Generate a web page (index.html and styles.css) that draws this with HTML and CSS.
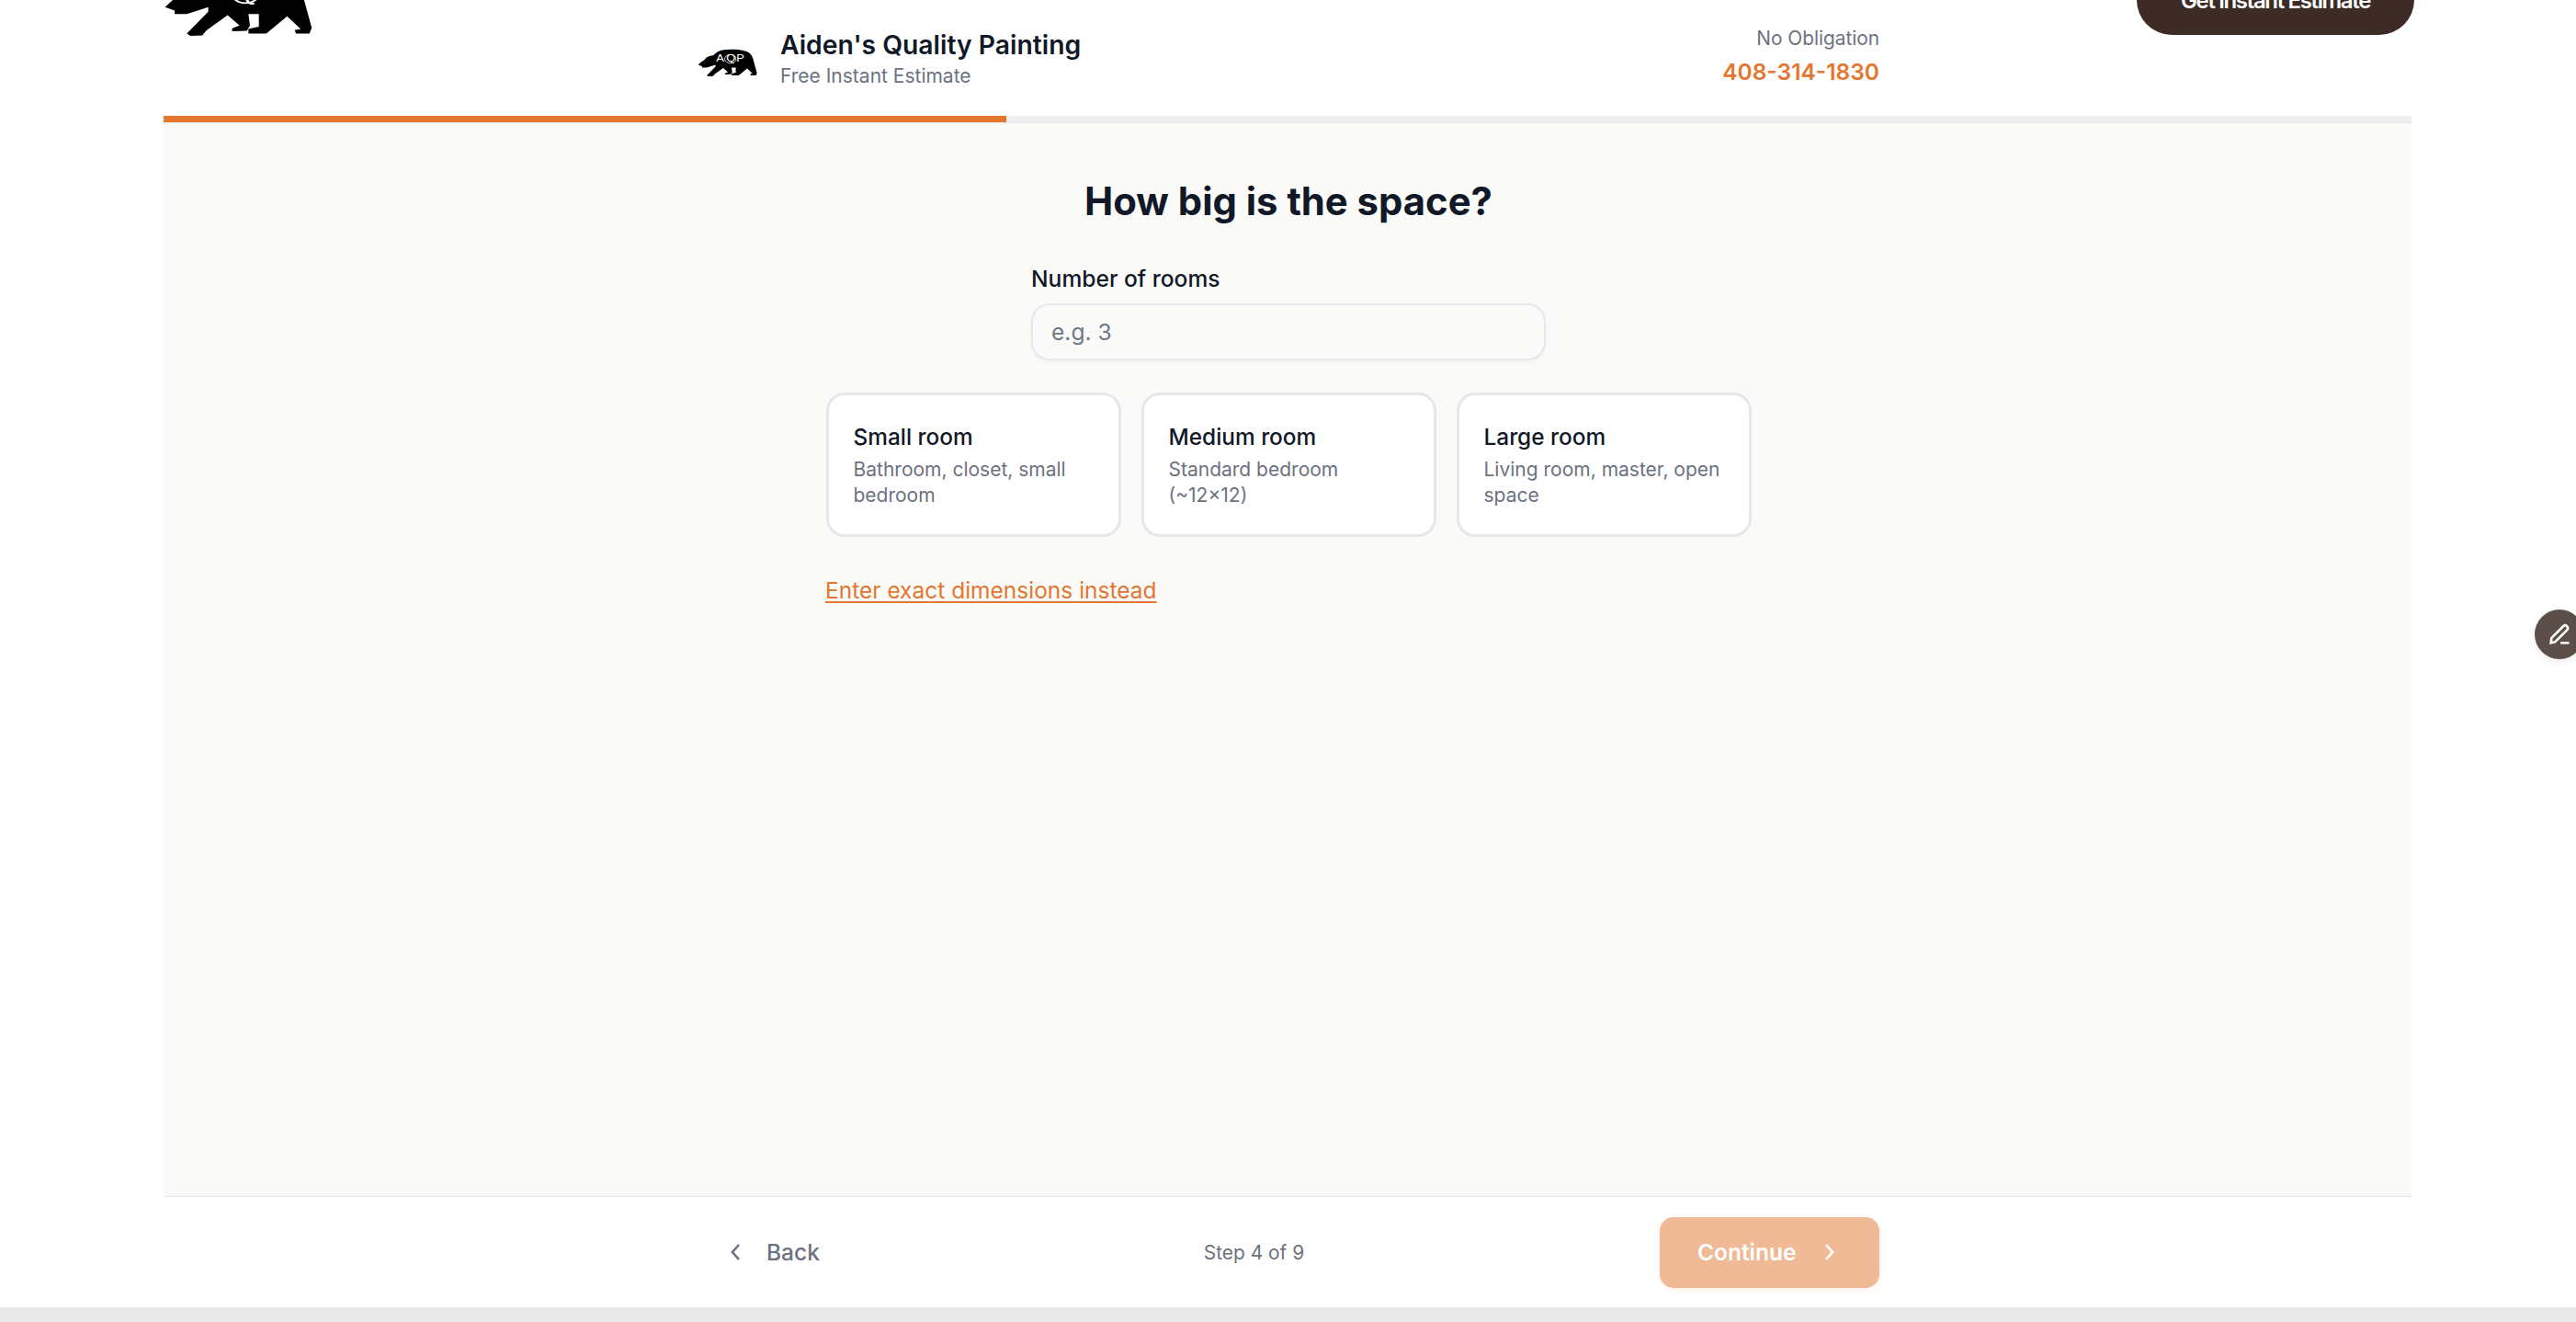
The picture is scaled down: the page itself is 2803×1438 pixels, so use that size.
FILE: index.html
```html
<!DOCTYPE html>
<html lang="en">
<head>
  <meta charset="UTF-8" />
  <meta name="viewport" content="width=device-width, initial-scale=1.0" />
  <title>Aiden's Quality Painting – Estimate</title>
  <link rel="stylesheet" href="styles.css">
</head>
<body>
  <svg class="sprite" aria-hidden="true">
    <symbol id="bear" viewBox="0 0 100 60" preserveAspectRatio="none">
      <path d="M1 35 L6 29 L11 25 L15 19 L20 16 L27 14 C32 6 40 2 50 2 C62 1 72 2 80 5 C88 8 92 15 94 27 L99.5 53 L98 58 L89 58 L88 55 L92 54 L83 43 L69 58 L57 58 L57 54 L64 52 L64 41 L57 41 L58 51 L56 55.5 L46 56 L46 53.5 L51 51 L43 42 L29 55 L26 59.5 L18 60 L15.6 58 L30 39 L30 35 L15.6 41 L7.4 41 L7.4 38 Z" fill="#000"/>
      <circle cx="55" cy="22" r="9.5" fill="none" stroke="#fff" stroke-width="1.4"/>
      <text x="31" y="29" class="bear-letters">A</text>
      <text x="48" y="29" class="bear-letters">Q</text>
      <text x="65" y="29" class="bear-letters">P</text>
    </symbol>
  </svg>

  <div class="site-top">
    <svg class="bear-big"><use href="#bear"/></svg>
    <a class="get-btn" href="#">Get Instant Estimate</a>
  </div>

  <div class="wizard">
    <header class="wizard-head">
      <div class="head-inner">
        <div class="brand">
          <svg class="bear-small"><use href="#bear"/></svg>
          <div>
            <div class="brand-name">Aiden's Quality Painting</div>
            <div class="brand-sub">Free Instant Estimate</div>
          </div>
        </div>
        <div class="contact">
          <div class="contact-note">No Obligation</div>
          <a class="contact-phone" href="#">408-314-1830</a>
        </div>
      </div>
    </header>

    <div class="progress"><div class="progress-fill"></div></div>

    <main class="step">
      <h1>How big is the space?</h1>
      <div class="field">
        <label for="rooms">Number of rooms</label>
        <input type="text" id="rooms" placeholder="e.g. 3" />
      </div>
      <div class="options">
        <button class="room-card" type="button">
          <span class="room-name">Small room</span>
          <span class="room-desc">Bathroom, closet, small bedroom</span>
        </button>
        <button class="room-card" type="button">
          <span class="room-name">Medium room</span>
          <span class="room-desc">Standard bedroom (~12×12)</span>
        </button>
        <button class="room-card" type="button">
          <span class="room-name">Large room</span>
          <span class="room-desc">Living room, master, open space</span>
        </button>
      </div>
      <a class="exact-link" href="#">Enter exact dimensions instead</a>
    </main>

    <footer class="wizard-foot">
      <div class="foot-inner">
        <button class="back-btn" type="button">
          <svg class="chev" viewBox="0 0 12 20"><path d="M10 2 L3 10 L10 18"/></svg>
          Back
        </button>
        <span class="step-count">Step 4 of 9</span>
        <button class="next-btn" type="button">
          Continue
          <svg class="chev" viewBox="0 0 12 20"><path d="M2 2 L9 10 L2 18"/></svg>
        </button>
      </div>
    </footer>
  </div>

  <div class="page-end"></div>

  <button class="edit-fab" type="button" aria-label="Edit">
    <svg viewBox="0 0 24 24"><path d="M4 20 L4.5 15.5 L15.5 4.5 C16.5 3.5 18 3.5 19 4.5 C20 5.5 20 7 19 8 L8 19 Z"/><path d="M13 20 H21"/></svg>
  </button>
</body>
</html>
```

FILE: styles.css
```css
:root {
  --orange: #e5762f;
  --ink: #111827;
  --muted: #6b7280;
  --line: #e5e7eb;
  --page: #fafaf8;
}
* {
  box-sizing: border-box;
}
html, body {
  height: 100%;
}
body {
  margin: 0;
  font-family: Inter, "Liberation Sans", Arial, sans-serif;
  background: #fff;
  color: var(--ink);
  overflow: hidden;
}
a {
  color: inherit;
  text-decoration: none;
}
button {
  font-family: inherit;
  cursor: pointer;
}
.sprite {
  display: none;
}

/* top of the site nav, scrolled mostly out of view */
.site-top {
  height: 39px;
  margin-left: 178px;
  width: 2449px;
  display: flex;
  justify-content: space-between;
  align-items: flex-end;
  overflow: hidden;
}
.bear-big {
  width: 162px;
  height: 75px;
  flex: none;
}
.get-btn {
  flex: none;
  width: 302px;
  height: 76px;
  margin-bottom: 1px;
  border-radius: 0 0 38px 38px;
  background: #3d2c26;
  color: #fff;
  font-size: 24px;
  font-weight: 600;
  letter-spacing: -1.35px;
  text-align: center;
  line-height: 78px;
}

.wizard {
  margin-left: 178px;
  width: 2446px;
}
.wizard-head {
  height: 87px;
}
.head-inner, .foot-inner {
  width: 1288px;
  margin: 0 auto;
  display: flex;
  justify-content: space-between;
  align-items: center;
}
.head-inner {
  height: 87px;
  align-items: flex-start;
}
.brand {
  display: flex;
  gap: 25px;
  align-items: center;
  margin-left: 2px;
}
.bear-small {
  width: 65px;
  height: 30px;
  flex: none;
}
.brand-name {
  font-size: 28.3px;
  font-weight: 600;
  line-height: 36px;
  margin-top: -8px;
}
.brand-sub {
  font-size: 21px;
  color: var(--muted);
  line-height: 28px;
  margin-top: 2px;
}
.contact {
  text-align: right;
  margin-top: -11px;
}
.contact-note {
  font-size: 20.8px;
  color: var(--muted);
  line-height: 28px;
}
.contact-phone {
  display: block;
  margin-top: 4px;
  font-size: 24.5px;
  font-weight: 600;
  line-height: 36px;
  color: var(--orange);
}

.progress {
  height: 8px;
  background: #efefef;
  border-bottom: 1px solid var(--line);
}
.progress-fill {
  width: 37.5%;
  height: 7px;
  background: var(--orange);
}

.step {
  height: 1167px;
  background: var(--page);
  padding: 57px 0 0 2px;
  display: flex;
  flex-direction: column;
  align-items: center;
}
h1 {
  margin: 0;
  font-size: 41.8px;
  font-weight: 700;
  line-height: 56px;
}
.field {
  width: 560px;
  margin-top: 38px;
}
.field label {
  display: block;
  font-size: 24.6px;
  font-weight: 500;
  line-height: 36px;
  margin-bottom: 9px;
}
.field input {
  display: block;
  width: 100%;
  height: 62px;
  padding: 0 20px;
  border: 2px solid #e8e8ec;
  border-radius: 20px;
  background: var(--page);
  box-shadow: 0 2px 4px rgba(0, 0, 0, 0.04);
  font-family: inherit;
  font-size: 24.6px;
  color: var(--ink);
  outline: none;
}
.field input::placeholder {
  color: #6f7789;
  opacity: 1;
}
.options {
  width: 1007px;
  margin-top: 35px;
  display: grid;
  grid-template-columns: repeat(3, 1fr);
  gap: 22px;
}
.room-card {
  height: 157px;
  padding: 0 27px;
  border: 3px solid var(--line);
  border-radius: 20px;
  background: #fff;
  text-align: left;
  display: flex;
  flex-direction: column;
  justify-content: center;
  color: var(--ink);
}
.room-name {
  font-size: 24.4px;
  font-weight: 500;
  line-height: 32px;
}
.room-desc {
  font-size: 21px;
  line-height: 28px;
  color: var(--muted);
  margin-top: 5px;
  padding-top: 1px;
}
.exact-link {
  align-self: flex-start;
  margin-left: 718px;
  margin-top: 41px;
  font-size: 24.5px;
  line-height: 34px;
  color: var(--orange);
  text-decoration: underline;
  text-underline-offset: 3px;
}

.wizard-foot {
  height: 121px;
  border-top: 1px solid var(--line);
  background: #fff;
}
.foot-inner {
  height: 120px;
}
.chev {
  width: 12px;
  height: 20px;
  fill: none;
  stroke: currentColor;
  stroke-width: 2.6;
}
.back-btn {
  display: flex;
  align-items: center;
  gap: 28px;
  padding: 0 31px 0 37px;
  height: 77px;
  border: 0;
  background: none;
  font-size: 24.5px;
  font-weight: 500;
  color: var(--muted);
}
.step-count {
  font-size: 20.9px;
  color: var(--muted);
}
.next-btn {
  display: flex;
  align-items: center;
  gap: 30px;
  width: 239px;
  height: 77px;
  padding: 0 0 0 41px;
  border: 0;
  border-radius: 15px;
  background: #f0ba96;
  box-shadow: 0 2px 6px rgba(229, 118, 47, 0.1);
  font-size: 24.5px;
  font-weight: 600;
  color: #fff;
}

.page-end {
  height: 16px;
  background: #e9e9e9;
}

.edit-fab {
  position: fixed;
  left: 2758px;
  top: 663px;
  width: 54px;
  height: 54px;
  padding: 13px;
  border: 0;
  border-radius: 50%;
  background: #5c4f4a;
  box-shadow: 0 3px 8px rgba(0, 0, 0, 0.08);
}
.edit-fab svg {
  display: block;
  width: 28px;
  height: 28px;
  fill: none;
  stroke: #fff;
  stroke-width: 2.2;
}
.bear-letters {
  font-family: "Liberation Sans", Arial, sans-serif;
  font-size: 20px;
  fill: #fff;
}
```
